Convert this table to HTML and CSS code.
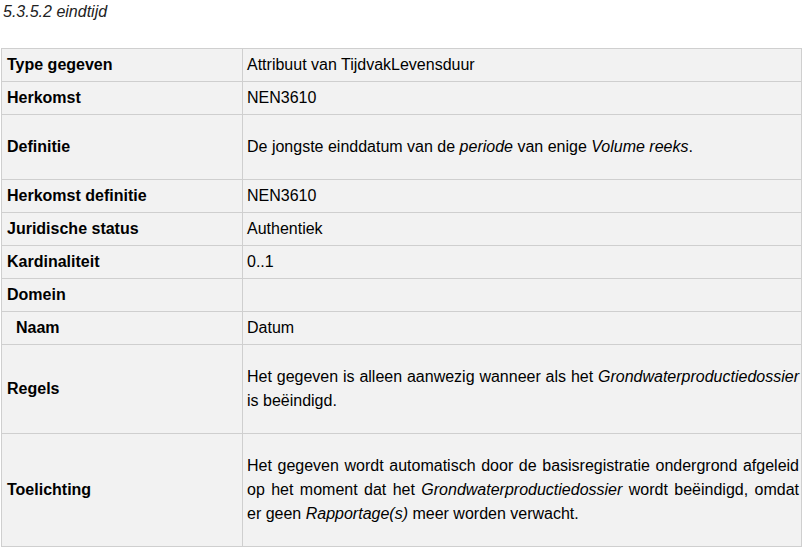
FILE: index.html
```html
<!DOCTYPE html>
<html lang="nl">
<head>
<meta charset="utf-8">
<title>5.3.5.2 eindtijd</title>
<link rel="stylesheet" href="styles.css">
</head>
<body>
<div class="caption">5.3.5.2 eindtijd</div>
<table class="attr">
  <colgroup><col class="c1"><col class="c2"></colgroup>
  <tbody>
    <tr><th>Type gegeven</th><td>Attribuut van TijdvakLevensduur</td></tr>
    <tr><th>Herkomst</th><td>NEN3610</td></tr>
    <tr><th>Definitie</th><td><p>De jongste einddatum van de <em>periode</em> van enige <em>Volume reeks</em>.</p></td></tr>
    <tr><th>Herkomst definitie</th><td>NEN3610</td></tr>
    <tr><th>Juridische status</th><td>Authentiek</td></tr>
    <tr><th>Kardinaliteit</th><td>0..1</td></tr>
    <tr><th>Domein</th><td></td></tr>
    <tr><th class="sub">Naam</th><td>Datum</td></tr>
    <tr><th>Regels</th><td><p>Het gegeven is alleen aanwezig wanneer als het <em>Grondwaterproductiedossier</em> is beëindigd.</p></td></tr>
    <tr><th>Toelichting</th><td><p>Het gegeven wordt automatisch door de basisregistratie ondergrond afgeleid op het moment dat het <em>Grondwaterproductiedossier</em> wordt beëindigd, omdat er geen <em>Rapportage(s)</em> meer worden verwacht.</p></td></tr>
  </tbody>
</table>
</body>
</html>
```
FILE: styles.css
```css
html, body {
  margin: 0;
  padding: 0;
  background: #ffffff;
}
body {
  font-family: "Liberation Sans", Arial, sans-serif;
  font-size: 16px;
  color: #000;
}
.caption {
  font-style: italic;
  color: #222;
  line-height: 18px;
  padding: 3px 0 0 3px;
}
.attr {
  border-collapse: collapse;
  margin: 27px 0 0 1px;
  width: 801px;
  table-layout: fixed;
  border: 1px solid #000;
  background: #f2f2f2;
}
.c1 { width: 241px; }
.attr th, .attr td {
  border: 1px solid #cfcfcf;
  padding: 4px 5px;
  line-height: 24px;
  vertical-align: middle;
  text-align: left;
}
.attr th {
  font-weight: bold;
}
.attr td {
  text-align: justify;
  padding: 4px 2px 4px 4px;
}
.attr th.sub {
  padding-left: 14px;
}
.attr p {
  margin: 16px 0;
}
```
